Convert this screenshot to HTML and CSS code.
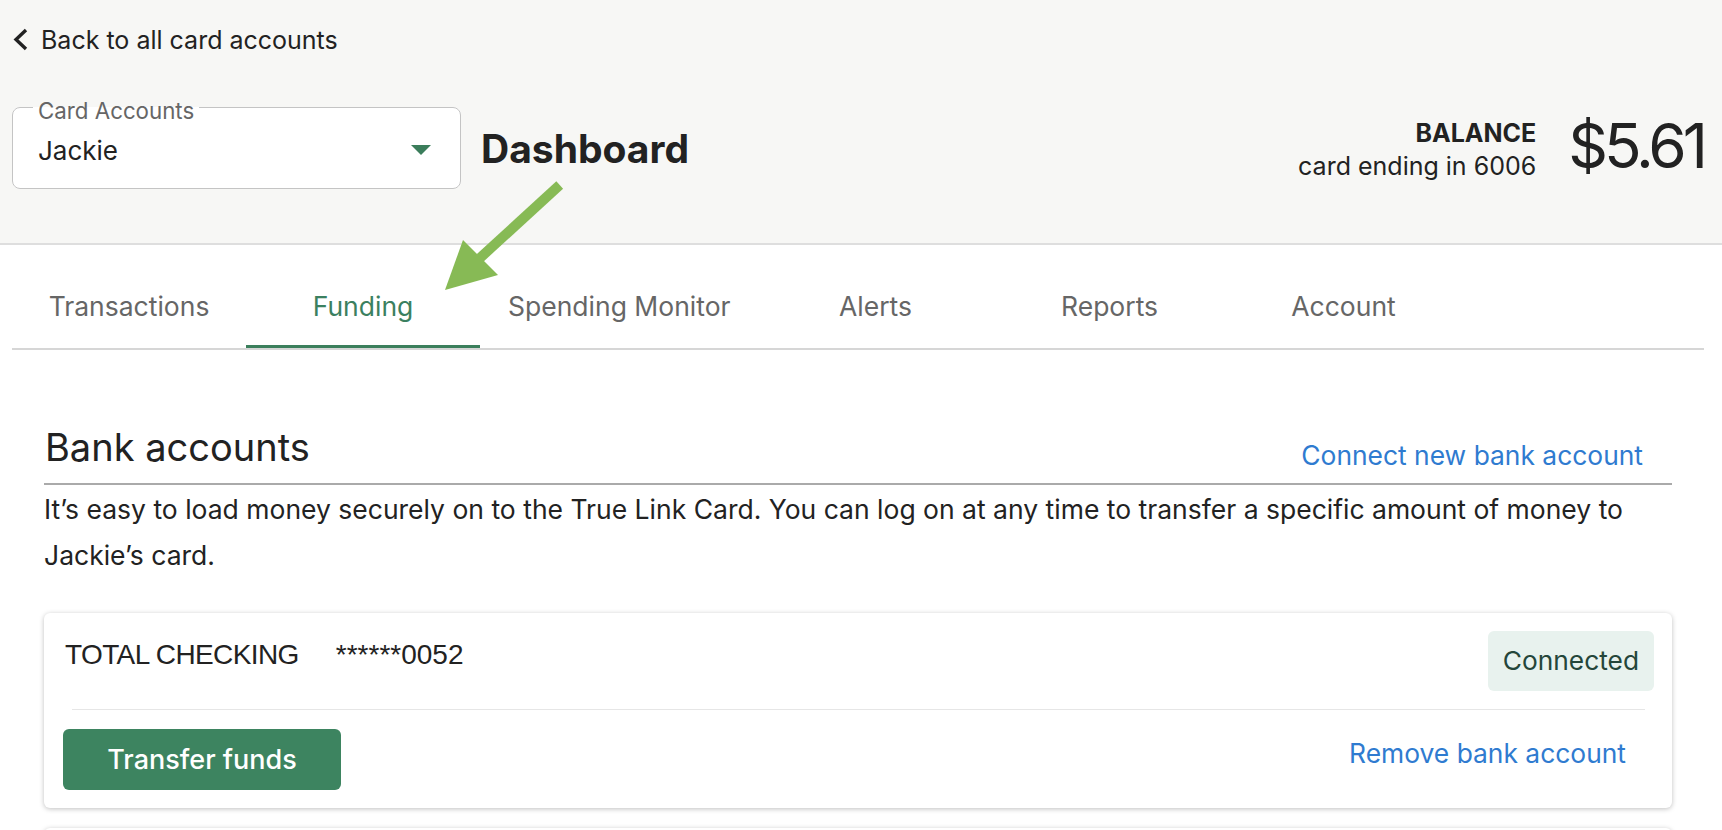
FILE: index.html
```html
<!DOCTYPE html>
<html>
  <head>
    <meta charset="UTF-8">
    <title>Funding - True Link</title>
    <link rel="stylesheet" href="styles.css">
  </head>
  <body>
    <div class="page">
      <header class="top">
        <a class="back" href="#cards">
          <svg width="16" height="24" viewBox="0 0 16 24"><polyline points="13,2 3,11.5 13,21" fill="none" stroke="#222" stroke-width="3.4"/></svg>
          Back to all card accounts
        </a>
        <div class="top-row">
          <fieldset class="picker">
            <legend>Card Accounts</legend>
            <div class="picker-value">
              <span>Jackie</span>
              <span class="caret"></span>
            </div>
          </fieldset>
          <h1 class="title">Dashboard</h1>
          <div class="balance">
            <div class="balance-label">
              <strong>BALANCE</strong>
              <span>card ending in 6006</span>
            </div>
            <div class="balance-amount">$5.61</div>
          </div>
        </div>
      </header>

      <nav class="tabs">
        <a class="tab" href="#transactions">Transactions</a>
        <a class="tab active" href="#funding">Funding</a>
        <a class="tab" href="#monitor">Spending Monitor</a>
        <a class="tab" href="#alerts">Alerts</a>
        <a class="tab" href="#reports">Reports</a>
        <a class="tab" href="#account">Account</a>
      </nav>

      <section class="bank">
        <div class="bank-head">
          <h2>Bank accounts</h2>
          <a class="link" href="#connect">Connect new bank account</a>
        </div>
        <p class="intro">It’s easy to load money securely on to the True Link Card. You can log on at any time to transfer a specific amount of money to Jackie’s card.</p>

        <div class="acct-card">
          <div class="acct-top">
            <div class="acct-name"><span class="acct-label">TOTAL CHECKING</span><span>******0052</span></div>
            <span class="badge">Connected</span>
          </div>
          <hr class="acct-divider">
          <div class="acct-bottom">
            <button class="btn">Transfer funds</button>
            <a class="link remove" href="#remove">Remove bank account</a>
          </div>
        </div>
        <div class="acct-card stub"></div>
      </section>

      <!-- annotation arrow pointing at the Funding tab -->
      <svg class="arrow" width="130" height="120" viewBox="0 0 130 120">
        <line x1="119.7" y1="10" x2="40" y2="83" stroke="#87ba55" stroke-width="10"/>
        <polygon points="5,115 23,65 58,100" fill="#87ba55"/>
      </svg>
    </div>
  </body>
</html>
```

FILE: styles.css
```css
/* Base page */
body {
  margin: 0;
  font-family: Inter, "Liberation Sans", sans-serif;
  color: #222;
  background: #fff;
}

.page {
  position: relative;
}

/* Header with card picker and balance */
.top {
  background: #f7f7f5;
  border-bottom: 2px solid #dedede;
  padding: 20px 18px 54px 12px;
}

.back {
  display: flex;
  align-items: center;
  gap: 12px;
  height: 40px;
  font-size: 25px;
  color: #222;
  text-decoration: none;
}

.back svg {
  margin-left: 1px;
}

.top-row {
  display: flex;
  align-items: center;
  margin-top: 32px;
}

.picker {
  margin: 0;
  width: 449px;
  min-width: 0;
  box-sizing: border-box;
  padding: 0 20px 10px;
  border: 1px solid #c4c4c4;
  border-radius: 8px;
  background: #fff;
}

.picker legend {
  padding: 8px 5px 0;
  font-size: 22.3px;
  line-height: 22px;
  color: #666;
}

.picker-value {
  display: flex;
  align-items: center;
  justify-content: space-between;
  height: 56px;
  padding: 0 9px 0 5px;
  font-size: 26px;
}

.caret {
  width: 0;
  height: 0;
  border-left: 10.5px solid transparent;
  border-right: 10.5px solid transparent;
  border-top: 10px solid #3b7d5b;
}

.title {
  margin: 16px 0 0 20px;
  font-size: 39px;
  font-weight: 700;
}

.balance {
  margin-left: auto;
  display: flex;
  align-items: center;
  gap: 32px;
}

.balance-label {
  display: flex;
  flex-direction: column;
  align-items: flex-end;
  line-height: 33px;
  margin-top: 18px;
}

.balance-label strong {
  font-size: 25px;
}

.balance-label span {
  font-size: 25px;
}

.balance-amount {
  margin-top: 10px;
  font-size: 62px;
  letter-spacing: -4px;
}

/* Tabs */
.tabs {
  display: flex;
  margin: 19px 18px 0 12px;
  border-bottom: 2px solid #d6d6d6;
}

.tab {
  min-width: 234px;
  box-sizing: border-box;
  height: 84px;
  padding: 3px 28px 0;
  display: flex;
  align-items: center;
  justify-content: center;
  border-bottom: 3px solid transparent;
  font-size: 26.5px;
  color: #666;
  text-decoration: none;
}

.tab.active {
  color: #3b8060;
  border-bottom-color: #3b7f5c;
}

/* Bank accounts section */
.bank {
  padding: 0 50px 0 44px;
  margin-top: 74px;
}

.bank-head {
  display: flex;
  justify-content: space-between;
  align-items: flex-end;
  padding: 0 29px 13px 1px;
  border-bottom: 2px solid #aaa;
}

.bank-head h2 {
  margin: 0;
  font-size: 38px;
  font-weight: 400;
  line-height: 46px;
}

.link {
  font-size: 26.4px;
  line-height: 30px;
  color: #2f7bd0;
  text-decoration: none;
}

.intro {
  margin: 1px 0 0;
  font-size: 26.5px;
  line-height: 46px;
}

.acct-card {
  margin-top: 35px;
  background: #fff;
  border-radius: 6px;
  box-shadow: 0 1px 5px rgba(0, 0, 0, 0.25);
  padding: 18px 18px 18px 19px;
}

.acct-top {
  display: flex;
  justify-content: space-between;
  align-items: flex-start;
}

.acct-name {
  margin: 8px 0 0 2px;
  font-family: "Liberation Sans", Arial, sans-serif;
  font-size: 28px;
  line-height: 32px;
}

.acct-label {
  letter-spacing: -0.6px;
  margin-right: 37px;
}

.badge {
  background: #e8f2ee;
  color: #24463a;
  font-size: 26.3px;
  line-height: 60px;
  padding: 0 15px;
  border-radius: 6px;
}

.acct-divider {
  margin: 18px 9px 19px 9px;
  border: none;
  border-top: 1px solid #e6e6e6;
}

.acct-bottom {
  display: flex;
  justify-content: space-between;
  align-items: center;
}

.btn {
  width: 278px;
  height: 61px;
  border: none;
  border-radius: 6px;
  background: #3d8460;
  color: #fff;
  font-family: Inter, "Liberation Sans", sans-serif;
  font-size: 27px;
  font-weight: 500;
  cursor: pointer;
}

.remove {
  margin: 0 28px 14px 0;
}

.stub {
  margin-top: 20px;
  height: 100px;
}

/* Annotation overlay */
.arrow {
  position: absolute;
  left: 440px;
  top: 175px;
}
```
